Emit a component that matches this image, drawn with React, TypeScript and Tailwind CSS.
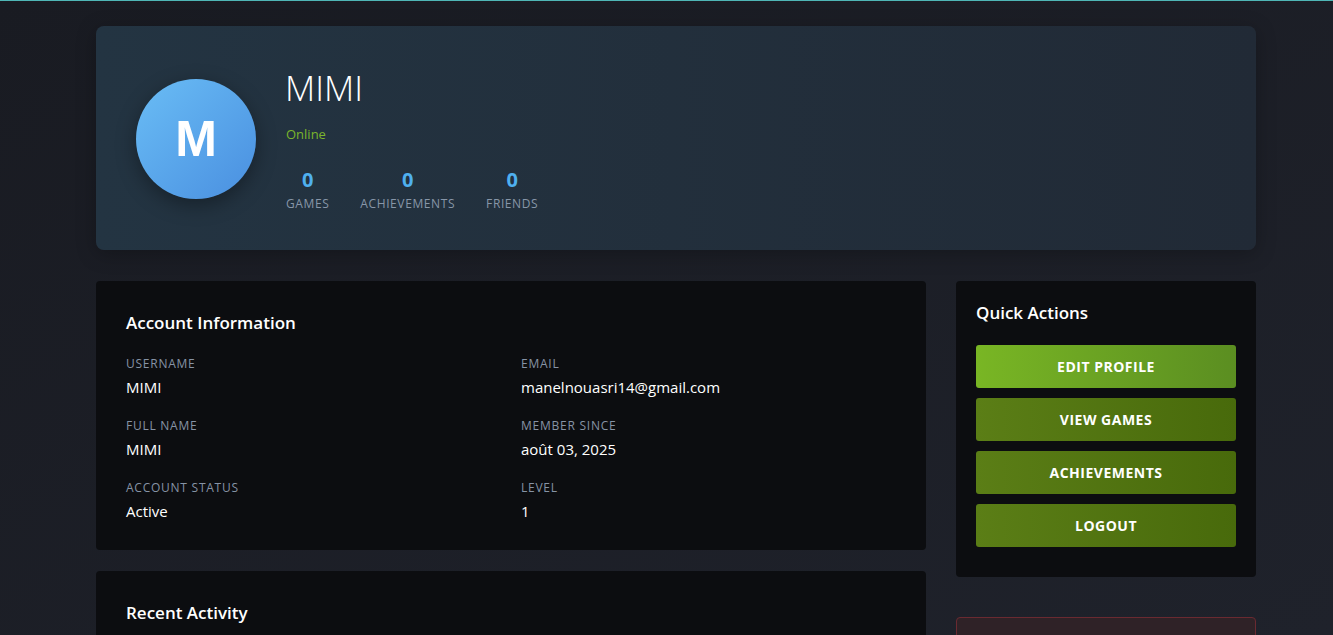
export default function App() {
  const stats = [
    { value: 0, label: "Games" },
    { value: 0, label: "Achievements" },
    { value: 0, label: "Friends" },
  ];

  const info = [
    { label: "Username", value: "MIMI" },
    { label: "Email", value: "manelnouasri14@gmail.com" },
    { label: "Full Name", value: "MIMI" },
    { label: "Member Since", value: "août 03, 2025" },
    { label: "Account Status", value: "Active" },
    { label: "Level", value: "1" },
  ];

  const actions = ["Edit Profile", "View Games", "Achievements", "Logout"];

  return (
    <main
      className="min-h-screen h-[635px] overflow-hidden border-t border-[#4fb6b6] bg-gradient-to-br from-[#191b22] to-[#1f222b] pt-[25px] pl-[96px] text-white"
      style={{ fontFamily: '"Open Sans", "Noto Sans", sans-serif' }}
    >
      <div className="w-[1160px]">
        {/* Profile header */}
        <section className="flex items-center gap-[30px] rounded-lg bg-gradient-to-r from-[#233442] to-[#212a36] px-10 pt-10 pb-[38px] shadow-[0_4px_20px_rgba(0,0,0,0.25)]">
          <div className="flex h-[120px] w-[120px] shrink-0 items-center justify-center rounded-full bg-gradient-to-br from-[#6abdf5] to-[#4a8fe0] shadow-[0_6px_20px_rgba(0,0,0,0.35)]">
            <span
              className="text-[50px] font-bold leading-none text-white"
              style={{ fontFamily: '"Liberation Sans", Arial, sans-serif' }}
            >
              M
            </span>
          </div>
          <div className="flex flex-col">
            <h1 className="-ml-px text-[35px] font-light leading-[43px] text-white">MIMI</h1>
            <p className="mt-[15px] text-[13px] leading-[20px] text-[#7bb52c]">Online</p>
            <div className="mt-[22px] flex gap-[31px]">
              {stats.map((s) => (
                <div key={s.label} className="flex flex-col items-center">
                  <span className="text-[20px] font-bold leading-[28px] text-[#4fb0ef]">{s.value}</span>
                  <span className="mt-[2px] text-[12px] uppercase leading-[16px] tracking-[0.6px] text-[#8796a8]">
                    {s.label}
                  </span>
                </div>
              ))}
            </div>
          </div>
        </section>

        <div className="mt-[31px] flex items-start gap-[30px]">
          {/* Main column */}
          <div className="flex w-[830px] flex-col gap-[21px]">
            <section className="rounded-[4px] bg-[#0c0d10] p-[30px] pb-[29px]">
              <h2 className="text-[17px] font-semibold leading-[24px] text-white">Account Information</h2>
              <div className="mt-5 grid grid-cols-2 gap-x-5 gap-y-5">
                {info.map((row) => (
                  <div key={row.label} className="flex flex-col gap-[6px]">
                    <span className="mt-px text-[12px] uppercase leading-[16px] tracking-[0.75px] text-[#8693a5]">
                      {row.label}
                    </span>
                    <span className="-mt-px text-[15px] leading-[20px] text-white">{row.value}</span>
                  </div>
                ))}
              </div>
            </section>

            <section className="h-[120px] rounded-[4px] bg-[#0c0d10] p-[30px]">
              <h2 className="text-[17px] font-semibold leading-[24px] text-white">Recent Activity</h2>
            </section>
          </div>

          {/* Sidebar */}
          <div className="flex w-[300px] flex-col gap-10">
            <section className="rounded-[4px] bg-[#0c0d10] p-5 pb-[30px]">
              <h2 className="text-[17px] font-semibold leading-[24px] text-white">Quick Actions</h2>
              <div className="mt-5 flex flex-col gap-[10px]">
                {actions.map((a, i) => (
                  <button
                    key={a}
                    className={
                      i === 0
                        ? "h-[43px] rounded-[3px] bg-gradient-to-r from-[#79b624] to-[#5b8e21] text-[14px] font-bold uppercase tracking-[0.5px] text-white"
                        : "h-[43px] rounded-[3px] bg-gradient-to-r from-[#5b7e16] to-[#486a0b] text-[14px] font-bold uppercase tracking-[0.5px] text-white"
                    }
                  >
                    {a}
                  </button>
                ))}
              </div>
            </section>

            <section className="h-[120px] rounded-[4px] border border-[#6a2a31] bg-[#2f2227]" />
          </div>
        </div>
      </div>
    </main>
  );
}
